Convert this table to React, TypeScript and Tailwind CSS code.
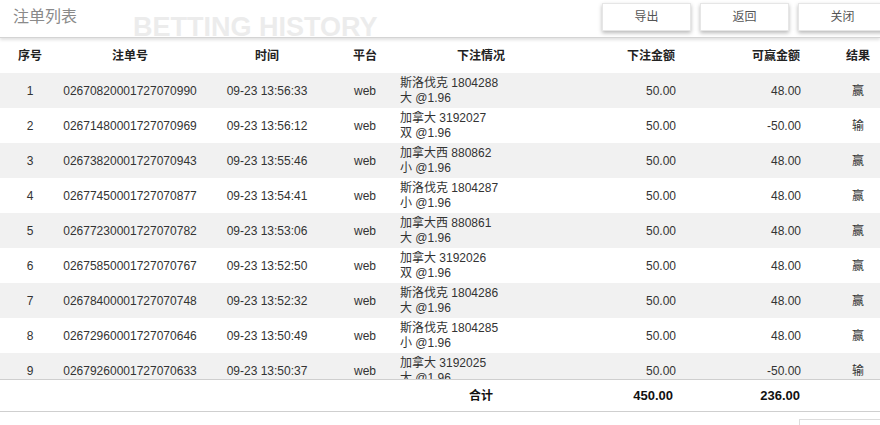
import type { JSX } from 'react';

interface BetRow {
  readonly no: number;
  readonly id: string;
  readonly time: string;
  readonly game: string;
  readonly pick: string;
  readonly amount: string;
  readonly win: string;
  readonly result: string;
}

const rows: BetRow[] = [
  { no: 1, id: '02670820001727070990', time: '09-23 13:56:33', game: '斯洛伐克 1804288', pick: '大 @1.96', amount: '50.00', win: '48.00', result: '赢' },
  { no: 2, id: '02671480001727070969', time: '09-23 13:56:12', game: '加拿大 3192027', pick: '双 @1.96', amount: '50.00', win: '-50.00', result: '输' },
  { no: 3, id: '02673820001727070943', time: '09-23 13:55:46', game: '加拿大西 880862', pick: '小 @1.96', amount: '50.00', win: '48.00', result: '赢' },
  { no: 4, id: '02677450001727070877', time: '09-23 13:54:41', game: '斯洛伐克 1804287', pick: '小 @1.96', amount: '50.00', win: '48.00', result: '赢' },
  { no: 5, id: '02677230001727070782', time: '09-23 13:53:06', game: '加拿大西 880861', pick: '大 @1.96', amount: '50.00', win: '48.00', result: '赢' },
  { no: 6, id: '02675850001727070767', time: '09-23 13:52:50', game: '加拿大 3192026', pick: '双 @1.96', amount: '50.00', win: '48.00', result: '赢' },
  { no: 7, id: '02678400001727070748', time: '09-23 13:52:32', game: '斯洛伐克 1804286', pick: '大 @1.96', amount: '50.00', win: '48.00', result: '赢' },
  { no: 8, id: '02672960001727070646', time: '09-23 13:50:49', game: '斯洛伐克 1804285', pick: '小 @1.96', amount: '50.00', win: '48.00', result: '赢' },
  { no: 9, id: '02679260001727070633', time: '09-23 13:50:37', game: '加拿大 3192025', pick: '大 @1.96', amount: '50.00', win: '-50.00', result: '输' },
];

const cols = 'grid grid-cols-[60px_140px_134px_62px_170px_120px_150px_44px] items-center';

function HeaderButton({ label }: { readonly label: string }): JSX.Element {
  return (
    <button
      type="button"
      className="h-[28px] w-[89px] shrink-0 border border-[#e6e6e6] bg-white text-[12px] text-[#555] shadow-[0_2px_4px_rgba(0,0,0,0.28)]"
    >
      {label}
    </button>
  );
}

export default function App(): JSX.Element {
  return (
    <div className="h-[425px] w-[880px] overflow-hidden bg-white font-['Liberation_Sans','Noto_Sans_CJK_SC',sans-serif] text-[12px] text-[#333]">
      <header className="relative z-10 flex h-[38px] items-start overflow-hidden border-b border-[#d4d4d4] shadow-[0_2px_3px_rgba(0,0,0,0.12)]">
        <h1 className="mt-[7px] pl-[13px] text-[16px] leading-[20px] font-normal text-[#8a8a8a]">注单列表</h1>
        <span className="ml-[56px] mt-[14px] text-[27px] leading-none font-bold whitespace-nowrap text-[#ececec]">BETTING HISTORY</span>
        <div className="ml-auto mt-[3px] flex w-[278px] shrink-0 gap-[9px]">
          <HeaderButton label="导出" />
          <HeaderButton label="返回" />
          <HeaderButton label="关闭" />
        </div>
      </header>

      <div className={`${cols} h-[35px] font-bold text-[#222]`}>
        <div className="text-center">序号</div>
        <div className="text-center">注单号</div>
        <div className="text-center">时间</div>
        <div className="text-center">平台</div>
        <div className="text-center">下注情况</div>
        <div className="pr-[11px] text-right">下注金额</div>
        <div className="pr-[36px] text-right">可赢金额</div>
        <div className="text-center">结果</div>
      </div>

      <div className="h-[306px] overflow-hidden">
        {rows.map((row) => (
          <div key={row.no} className={`${cols} h-[35px] shrink-0 ${row.no % 2 === 1 ? 'bg-[#f1f1f1]' : 'bg-white'}`}>
            <div className="text-center">{row.no}</div>
            <div className="text-center">{row.id}</div>
            <div className="text-center">{row.time}</div>
            <div className="text-center">web</div>
            <div className="pl-[4px] leading-[15px]">
              <div>{row.game}</div>
              <div>{row.pick}</div>
            </div>
            <div className="pr-[10px] text-right">{row.amount}</div>
            <div className="pr-[35px] text-right">{row.win}</div>
            <div className="text-center">{row.result}</div>
          </div>
        ))}
      </div>

      <div className={`${cols} h-[33px] border-y border-[#cfcfcf] font-bold text-[#111]`}>
        <div />
        <div />
        <div />
        <div />
        <div className="text-center">合计</div>
        <div className="pr-[13px] text-right text-[13px]">450.00</div>
        <div className="pr-[36px] text-right text-[13px]">236.00</div>
        <div />
      </div>

      <div className="flex justify-end pt-[7px]">
        <div className="h-[20px] w-[81px] border-l border-t border-[#dcdcdc]" />
      </div>
    </div>
  );
}
